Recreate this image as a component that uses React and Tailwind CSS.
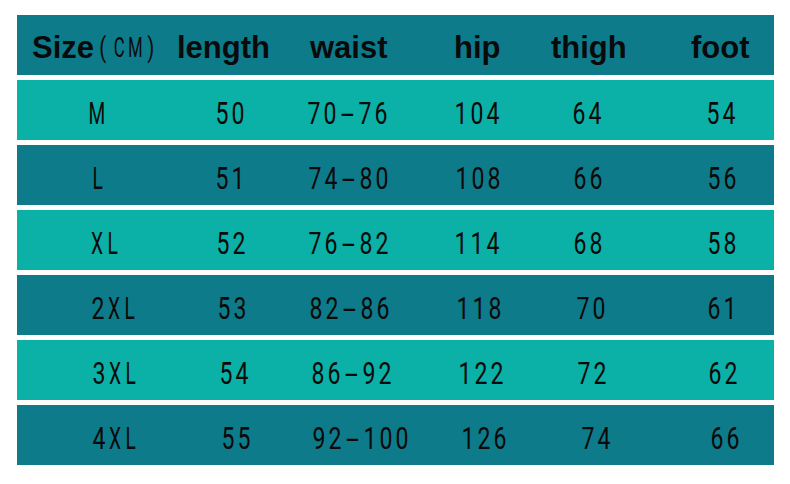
import React from 'react';

const rows = [
    { cells: ['M', '50', '70-76', '104', '64', '54'], tone: 'light', cols: 'pl-[72px] grid-cols-[125px_92px_147px_118px_134px_1fr]' },
    { cells: ['L', '51', '74-80', '108', '66', '56'], tone: 'dark', cols: 'pl-[73px] grid-cols-[124px_93px_147px_118px_134px_1fr]' },
    { cells: ['XL', '52', '76-82', '114', '68', '58'], tone: 'light', cols: 'pl-[72px] grid-cols-[126px_92px_146px_119px_134px_1fr]' },
    { cells: ['2XL', '53', '82-86', '118', '70', '61'], tone: 'dark', cols: 'pl-[73px] grid-cols-[126px_92px_147px_120px_131px_1fr]' },
    { cells: ['3XL', '54', '86-92', '122', '72', '62'], tone: 'light', cols: 'pl-[74px] grid-cols-[127px_92px_147px_119px_131px_1fr]' },
    { cells: ['4XL', '55', '92-100', '126', '74', '66'], tone: 'dark', cols: 'pl-[74px] grid-cols-[129px_91px_149px_120px_129px_1fr]' },
];

// narrow glyphs: every character sits in its own box, squeezed sideways
function Narrow({ text, small }) {
    return (
        <span className="inline-flex">
            {text.split('').map((ch, i) => {
                const letter = /[A-Z]/.test(ch);
                const dash = ch === '-';
                const box = dash ? 'w-[19px]' : small ? 'w-[16px]' : 'w-4';
                const squeeze = dash ? 'scale-x-[1.5]' : letter ? 'scale-x-[0.6]' : 'scale-x-[0.72]';
                return (
                    <span key={i} className={`inline-flex justify-center ${box}`}>
                        <span className={`inline-block ${squeeze}`}>{ch}</span>
                    </span>
                );
            })}
        </span>
    );
}

export default function App() {
    return (
        <div className="w-[790px] h-[484px] bg-white pt-[15px] pl-[17px]">
            <div className="w-[757px] flex flex-col gap-[5px]">
                <div className="h-[60px] bg-[#0e7b8b] flex items-center pt-[5px] pl-[15px] text-[#0a0a0a] leading-none font-bold text-[31px]"
                    style={{ fontFamily: '"Liberation Sans", Arial, sans-serif' }}>
                    <div className="w-[145px] flex items-center">
                        <span>Size</span>
                        <span className="font-normal text-[28px] ml-[1px] pt-[1px]" style={{ fontFamily: 'Roboto, sans-serif' }}>
                            <Narrow text="(CM)" small />
                        </span>
                    </div>
                    <div className="w-[133px]">length</div>
                    <div className="w-[144px]">waist</div>
                    <div className="w-[97px]">hip</div>
                    <div className="w-[140px]">thigh</div>
                    <div>foot</div>
                </div>
                {rows.map((row, r) => (
                    <div key={r}
                        className={`h-[60px] grid items-center pt-[6px] leading-none text-[32px] text-[#0a0a0a] ${row.cols} ${row.tone === 'light' ? 'bg-[#0bb0a6]' : 'bg-[#0e7b8b]'}`}
                        style={{ fontFamily: 'Roboto, sans-serif' }}>
                        {row.cells.map((c, i) => (
                            <div key={i}><Narrow text={c} /></div>
                        ))}
                    </div>
                ))}
            </div>
        </div>
    );
}
